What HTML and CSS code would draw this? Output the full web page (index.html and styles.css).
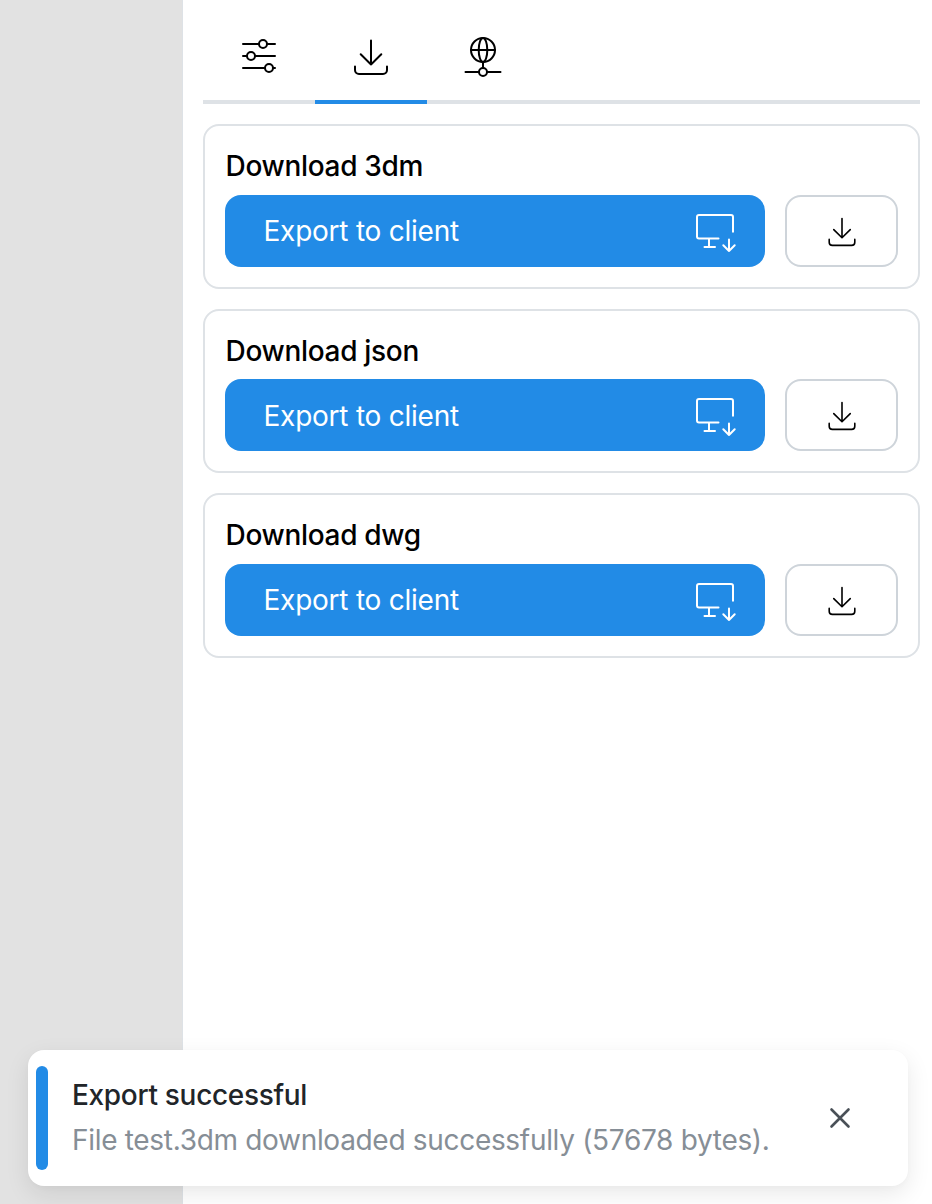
FILE: index.html
```html
<!DOCTYPE html>
<html lang="en">
<head>
<meta charset="utf-8">
<title>Export</title>
<link rel="stylesheet" href="styles.css">
</head>
<body>
<svg class="sprite" aria-hidden="true">
  <symbol id="download" viewBox="0 0 40 40">
    <path d="M20 4.500V28.500M9.700 18.200L20 28.500l10.300-10.300M4 30.500V34a4 4 0 0 0 4 4h24a4 4 0 0 0 4-4v-3.500"/>
  </symbol>
  <symbol id="monitor" viewBox="0 0 40 40">
    <path d="M38 20.800V6a2 2 0 0 0-2-2H4a2 2 0 0 0-2 2v19.500a2 2 0 0 0 2 2h19.500M14 27.500V36M9.500 36h10.500M34 28.500V40M28.300 34.300L34 40l5.700-5.700"/>
  </symbol>
</svg>
<div class="app">
  <aside class="viewport"></aside>
  <main class="panel">
    <nav class="tabs">
      <button class="tab" aria-label="Parameters">
        <svg class="icon" viewBox="0 0 40 40"><path d="M4 8H20M28 8h8M4 20H8M16 20h20M4 32H26M34 32h2"/><circle cx="24" cy="8" r="4"/><circle cx="12" cy="20" r="4"/><circle cx="30" cy="32" r="4"/></svg>
      </button>
      <button class="tab tab-active" aria-label="Export">
        <svg class="icon"><use href="#download"/></svg>
      </button>
      <button class="tab" aria-label="Network">
        <svg class="icon" viewBox="0 0 40 40"><circle cx="20" cy="14" r="12"/><ellipse cx="20" cy="14" rx="4.300" ry="12"/><path d="M8 14h24M20 26v6M2.500 36H16M24 36h13.500"/><circle cx="20" cy="36" r="4"/></svg>
      </button>
    </nav>
    <div class="cards">
      <section class="card">
        <h2 class="card-title">Download 3dm</h2>
        <div class="actions">
          <button class="export"><span class="export-label">Export to client</span><svg class="icon"><use href="#monitor"/></svg></button>
          <button class="save" aria-label="Download"><svg class="icon-small"><use href="#download"/></svg></button>
        </div>
      </section>
      <section class="card">
        <h2 class="card-title">Download json</h2>
        <div class="actions">
          <button class="export"><span class="export-label">Export to client</span><svg class="icon"><use href="#monitor"/></svg></button>
          <button class="save" aria-label="Download"><svg class="icon-small"><use href="#download"/></svg></button>
        </div>
      </section>
      <section class="card">
        <h2 class="card-title">Download dwg</h2>
        <div class="actions">
          <button class="export"><span class="export-label">Export to client</span><svg class="icon"><use href="#monitor"/></svg></button>
          <button class="save" aria-label="Download"><svg class="icon-small"><use href="#download"/></svg></button>
        </div>
      </section>
    </div>
  </main>
  <div class="toast" role="alert">
    <div class="toast-bar"></div>
    <div class="toast-body">
      <div class="toast-title">Export successful</div>
      <div class="toast-text">File test.3dm downloaded successfully (57678 bytes).</div>
    </div>
    <button class="close" aria-label="Close"><svg class="close-icon" viewBox="0 0 20 20"><path d="M1.500 1.500l17 17M18.500 1.500l-17 17"/></svg></button>
  </div>
</div>
</body>
</html>
```
FILE: styles.css
```css
* { box-sizing: border-box; }
body { margin: 0; font-family: Inter, sans-serif; font-size: 28px; letter-spacing: -0.310px; color: #000; }
button { font: inherit; padding: 0; border: 0; background: none; }
svg { fill: none; stroke: currentColor; stroke-width: 2; stroke-linecap: round; stroke-linejoin: round; overflow: visible; }
symbol { overflow: visible; }
.sprite { position: absolute; width: 0; height: 0; }
.app { position: relative; display: flex; height: 1204px; overflow: hidden; background: #fff; }
.viewport { width: 182px; background: #e2e2e2; }
.panel { flex: 1; border-left: 1px solid #dee2e6; padding: 0 12px 0 20px; }
.tabs { display: flex; height: 104px; box-shadow: inset 0 -4px #dee2e6; }
.tab { display: flex; align-items: center; justify-content: center; width: 112px; height: 104px; padding: 36px 0 28px; color: #000; }
.tab-active { box-shadow: inset 0 -4px #228be6; }
.icon { width: 40px; height: 40px; }
.cards { display: flex; flex-direction: column; gap: 20px; padding-top: 20.250px; }
.card { height: 164.500px; border: 2px solid #dee2e6; border-radius: 16px; padding: 20px; }
.card-title { height: 48.400px; margin: 0; padding-left: 0.500px; font-size: 28px; font-weight: 500; line-height: 41px; white-space: nowrap; }
.actions { display: flex; gap: 20px; }
.export { display: flex; flex: 1; align-items: center; justify-content: space-between; height: 72px; padding: 0 30px 0 38.500px; border-radius: 16px; background: #228be6; color: #fff; letter-spacing: -0.240px; white-space: nowrap; }
.export-label { padding-top: 1px; }
.save { display: flex; align-items: center; justify-content: center; width: 113px; height: 72px; border: 2px solid #ced4da; border-radius: 16px; color: #000; }
.icon-small { width: 32px; height: 32px; }
.toast { position: absolute; left: 28px; top: 1050px; display: flex; align-items: center; width: 880px; height: 136px; padding: 16px 44px 16px 8px; border-radius: 16px; background: #fff; box-shadow: 0 2px 6px rgba(0,0,0,.02), 0 8px 24px rgba(0,0,0,.09); }
.toast-bar { width: 12px; height: 104px; border-radius: 6px; background: #228be6; }
.toast-body { flex: 1; padding: 1px 0 1px 24px; white-space: nowrap; }
.toast-title { line-height: 40px; margin-bottom: 4px; font-weight: 500; color: #212529; }
.toast-text { line-height: 42px; color: #868e96; }
.close { display: flex; align-items: center; justify-content: center; width: 48px; height: 48px; color: #495057; }
.close-icon { width: 20px; height: 20px; stroke-width: 2.600; }
```
